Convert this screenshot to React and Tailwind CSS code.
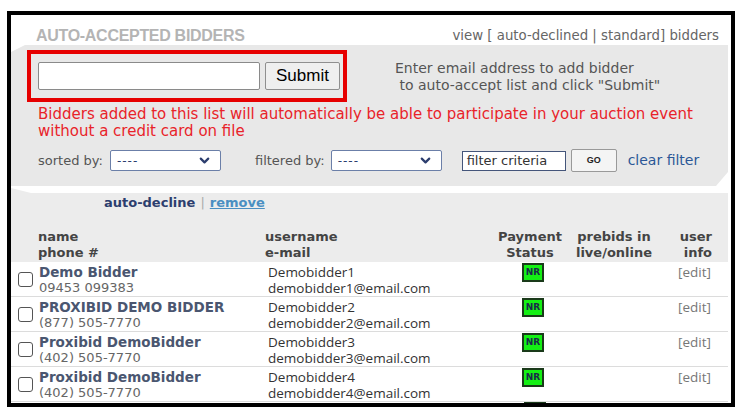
import { ChevronDown } from "lucide-react";

const ROWS = [
  { name: "Demo Bidder", phone: "09453 099383", user: "Demobidder1", email: "demobidder1@email.com" },
  { name: "PROXIBID DEMO BIDDER", phone: "(877) 505-7770", user: "Demobidder2", email: "demobidder2@email.com" },
  { name: "Proxibid DemoBidder", phone: "(402) 505-7770", user: "Demobidder3", email: "demobidder3@email.com" },
  { name: "Proxibid DemoBidder", phone: "(402) 505-7770", user: "Demobidder4", email: "demobidder4@email.com" },
];

const Select = ({ width }) => (
  <div className={`flex items-center justify-between h-[21px] ${width} bg-white border border-[#6b7fa8] rounded-[2px] pl-[6px] pr-[8px] text-[12px] text-[#2c3e6e]`}>
    <span className="tracking-[1px]">----</span>
    <ChevronDown size={15} strokeWidth={3.5} className="text-[#2c3e6e]" />
  </div>
);

const NR = () => (
  <div className="w-[22px] h-[19px] bg-[#14f014] border-2 border-[#1a3a1a] flex items-center justify-center text-[9px] font-bold text-[#1a2a4a] leading-none">
    NR
  </div>
);

export default function App() {
  return (
    <div className="w-[741px] h-[417px] bg-white pl-[7px] pt-[11px] overflow-hidden font-['DejaVu_Sans',sans-serif]">
      <div className="w-[728px] h-[396px] border-4 border-black bg-white overflow-hidden flex flex-col">
        {/* title bar */}
        <div className="shrink-0 h-[30px] flex items-end justify-between pl-[25px] pr-[12px] pb-[1px]">
          <span className="font-['Liberation_Sans',sans-serif] font-bold text-[16px] leading-[16px] text-[#b4b4b4] tracking-[-0.3px]">
            AUTO-ACCEPTED BIDDERS
          </span>
          <span className="text-[13.3px] leading-[16px] text-[#666]">view [ auto-declined | standard] bidders</span>
        </div>

        {/* add panel */}
        <div className="shrink-0 h-[141px] mr-[3px] bg-[#e8e8e8] pl-[16px] pt-[5px] flex flex-col [clip-path:polygon(0_7px,14px_0,100%_0,100%_127px,705px_100%,0_100%)]">
          <div className="flex items-start">
            <div className="w-[320px] h-[52px] border-4 border-[#e60000] flex items-center pl-[7px] gap-[5px]">
              <div className="w-[222px] h-[28px] bg-white border border-[#8a8a8a] rounded-[2px]" />
              <div className="w-[75px] h-[28px] bg-[#efefef] border border-[#8f8f8f] rounded-[2px] flex items-center justify-center font-['Liberation_Sans',sans-serif] text-[17px] text-black">
                Submit
              </div>
            </div>
            <div className="ml-[48px] pt-[10px] text-[14px] leading-[17px] text-[#555]">
              <div>Enter email address to add bidder</div>
              <div>&nbsp;to auto-accept list and click "Submit"</div>
            </div>
          </div>
          <div className="mt-[4px] pl-[11px] text-[15px] leading-[17px] text-[#e8232a]">
            <div>Bidders added to this list will automatically be able to participate in your auction event</div>
            <div>without a credit card on file</div>
          </div>
          <div className="mt-[9px] pl-[11px] flex items-center text-[13px] text-[#555]">
            <span>sorted by:</span>
            <div className="ml-[7px]">
              <Select width="w-[111px]" />
            </div>
            <span className="ml-[34px]">filtered by:</span>
            <div className="ml-[6px]">
              <Select width="w-[111px]" />
            </div>
            <div className="ml-[20px] w-[104px] h-[20px] bg-white border border-[#44557a] px-[4px] flex items-center text-[13px] text-[#333]">
              filter criteria
            </div>
            <div className="ml-[5px] w-[46px] h-[23px] bg-[#f4f4f4] border border-[#999] rounded-[2px] flex items-center justify-center font-['Liberation_Sans',sans-serif] font-bold text-[9px] text-[#222]">
              GO
            </div>
            <span className="ml-[11px] text-[14px] text-[#2b5797]">clear filter</span>
          </div>
        </div>

        {/* list header area */}
        <div className="shrink-0 mt-[2px] mr-[3px] bg-[#ececec] h-[74px] flex flex-col [clip-path:polygon(0_0,20px_5px,100%_5px,100%_0,100%_100%,0_100%)]">
          <div className="pl-[93px] pt-[7px] text-[13px] leading-[16px] font-bold flex items-center gap-[5px]">
            <span className="text-[#2c3e6e]">auto-decline</span>
            <span className="text-[#aaa] font-normal">|</span>
            <span className="text-[#4a8fc2] underline">remove</span>
          </div>
          <div className="mt-[18px] flex text-[13px] leading-[16px] font-bold text-[#444]">
            <div className="w-[27px]" />
            <div className="w-[227px]">
              <div>name</div>
              <div>phone #</div>
            </div>
            <div className="w-[229px]">
              <div>username</div>
              <div>e-mail</div>
            </div>
            <div className="w-[72px] text-center">
              <div>Payment</div>
              <div>Status</div>
            </div>
            <div className="w-[96px] text-center">
              <div>prebids in</div>
              <div>live/online</div>
            </div>
            <div className="w-[50px] text-right">
              <div>user</div>
              <div>info</div>
            </div>
          </div>
        </div>

        {/* rows */}
        <div className="shrink-0 flex flex-col mr-[3px]">
          {ROWS.map((r, i) => (
            <div key={i} className="shrink-0 h-[35px] border-b border-[#dcdcdc] flex pt-[1px] text-[13px] leading-[16px]">
              <div className="w-[27px] pl-[7px] pt-[9px]">
                <div className="w-[15px] h-[15px] border border-[#555] rounded-[3px] bg-white" />
              </div>
              <div className="w-[227px] pt-[1px] pl-[1px]">
                <div className="font-bold text-[13.5px] text-[#4a5670]">{r.name}</div>
                <div className="text-[#666]">{r.phone}</div>
              </div>
              <div className="w-[252px] pl-[3px] pt-[1px] font-['Open_Sans',sans-serif] text-[13.5px] text-[#333]">
                <div>{r.user}</div>
                <div>{r.email}</div>
              </div>
              <div className="w-[161px] pl-[5px]">
                <NR />
              </div>
              <div className="pt-[1px] text-[#777] font-['Open_Sans',sans-serif] text-[13.5px]">[edit]</div>
            </div>
          ))}
          <div className="pl-[513px]">
            <NR />
          </div>
        </div>
      </div>
    </div>
  );
}
